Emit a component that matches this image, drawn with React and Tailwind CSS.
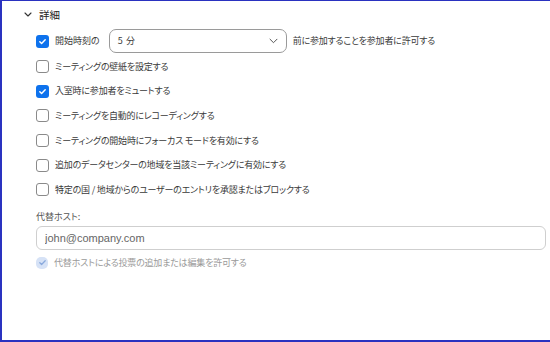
import { useState } from 'react';

const font = "font-['Noto_Sans_CJK_JP','Noto_Sans',sans-serif]";

function Check({ checked }) {
    if (checked) {
        return (
            <span className="flex items-center justify-center w-[13px] h-[13px] rounded-[3px] bg-[#0e72ed] shrink-0">
                <svg className="w-[9px] h-[9px]" viewBox="0 0 10 10" fill="none" stroke="white" strokeWidth={1.6} strokeLinecap="round" strokeLinejoin="round">
                    <path d="M2 5.2l2 2L8 3" />
                </svg>
            </span>
        );
    }
    return <span className="w-[13px] h-[13px] rounded-[3px] border border-[#8a8a8a] bg-white shrink-0"></span>;
}

const options = [
    { label: 'ミーティングの壁紙を設定する', checked: false },
    { label: '入室時に参加者をミュートする', checked: true },
    { label: 'ミーティングを自動的にレコーディングする', checked: false },
    { label: 'ミーティングの開始時にフォーカス モードを有効にする', checked: false },
    { label: '追加のデータセンターの地域を当該ミーティングに有効にする', checked: false },
    { label: '特定の国 / 地域からのユーザーのエントリを承認またはブロックする', checked: false },
];

export default function App() {
    const [host, setHost] = useState('');

    return (
        <div className={`w-[550px] h-[342px] bg-white border-t border-l-2 border-b-2 border-[#2a32c0] overflow-hidden ${font} text-[#3a3a3a]`}>
            {/* Section header */}
            <div className="flex items-center h-[27px] pl-[22px] gap-[7px]">
                <svg className="w-[8px] h-[5px]" viewBox="0 0 8 5" fill="none" stroke="#333" strokeWidth={1.1} strokeLinecap="round" strokeLinejoin="round">
                    <path d="M1 1l3 3 3-3" />
                </svg>
                <span className="text-[10.5px] text-[#222]">詳細</span>
            </div>

            <div className="pl-[34px] pr-[2px]">
                {/* Join before host */}
                <div className="flex items-center h-[26px] gap-[6px] text-[9px] tracking-[-0.2px] [font-feature-settings:'palt']">
                    <Check checked />
                    <span className="tracking-normal">開始時刻の</span>
                    <div className="flex items-center justify-between w-[178px] h-[24px] ml-[3px] px-[8px] border border-[#9a9a9a] rounded-[7px]">
                        <span>5&nbsp;&nbsp;分</span>
                        <svg className="w-[9px] h-[6px]" viewBox="0 0 9 6" fill="none" stroke="#555" strokeWidth={1} strokeLinecap="round" strokeLinejoin="round">
                            <path d="M1 1.2l3.5 3.5 3.5-3.5" />
                        </svg>
                    </div>
                    <span>前に参加することを参加者に許可する</span>
                </div>

                {options.map((o) => (
                    <div key={o.label} className="flex items-center h-[24.7px] gap-[6px] text-[9px] tracking-[-0.2px] [font-feature-settings:'palt']">
                        <Check checked={o.checked} />
                        <span>{o.label}</span>
                    </div>
                ))}

                {/* Alternative host */}
                <div className="mt-[9px] leading-[12px] text-[9px] text-[#555] [font-feature-settings:'palt']">代替ホスト:</div>
                <input
                    value={host}
                    onChange={(e) => setHost(e.target.value)}
                    placeholder="john@company.com"
                    className="mt-[2px] w-[510px] h-[24px] px-[8px] border border-[#cfcfcf] rounded-[6px] text-[11px] font-['Liberation_Sans',sans-serif] placeholder:text-[#666] outline-none"
                />
                <div className="flex items-center h-[25px] gap-[6px] text-[9px] tracking-[-0.2px] text-[#9a9a9a] [font-feature-settings:'palt']">
                    <span className="flex items-center justify-center w-[12px] h-[12px] rounded-[5px] bg-[#d6e2f6] shrink-0">
                        <svg className="w-[9px] h-[9px]" viewBox="0 0 10 10" fill="none" stroke="#89a9dc" strokeWidth={1.4} strokeLinecap="round" strokeLinejoin="round">
                            <path d="M2 5.2l2 2L8 3" />
                        </svg>
                    </span>
                    <span>代替ホストによる投票の追加または編集を許可する</span>
                </div>
            </div>
        </div>
    );
}
